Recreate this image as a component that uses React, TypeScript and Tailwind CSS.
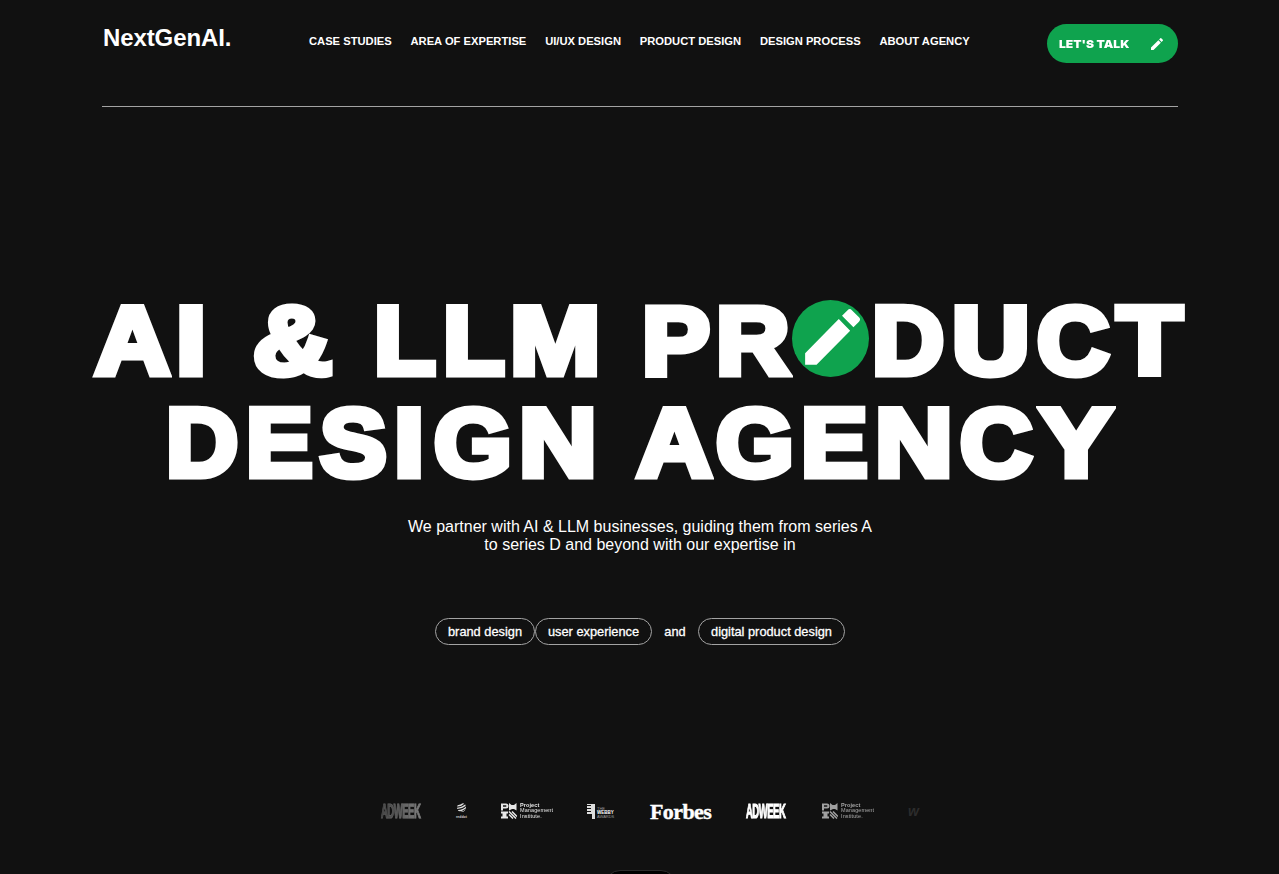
import type { ReactNode } from "react";

const navItems = [
  "CASE STUDIES",
  "AREA OF EXPERTISE",
  "UI/UX DESIGN",
  "PRODUCT DESIGN",
  "DESIGN PROCESS",
  "ABOUT AGENCY",
];

type Glyph = [char: string, className: string];

const ai: Glyph[] = [
  ["A", "w-[81.5px] scale-x-[1.08]"],
  ["I", "w-[76.6px] scale-x-[1.13]"],
];
const ampersand: Glyph[] = [["&", "w-[121.7px] scale-x-[1.14]"]];
const llm: Glyph[] = [
  ["L", "w-[68.5px] scale-x-[1.05]"],
  ["L", "w-[67.7px] scale-x-[1.05]"],
  ["M", "w-[131.2px] scale-x-[1.13]"],
];
const pr: Glyph[] = [
  ["P", "w-[74px] scale-x-[1.06]"],
  ["R", "w-[76.3px] scale-x-[1.06]"],
];
const duct: Glyph[] = [
  ["D", "w-[79.8px] scale-x-[1.04]"],
  ["U", "w-[84.8px] scale-x-[1.12]"],
  ["C", "w-[79.6px] scale-x-[1.04]"],
  ["T", "w-[62px] scale-x-[1.11]"],
];
const design: Glyph[] = [
  ["D", "w-[79.9px] scale-x-[1.04]"],
  ["E", "w-[73.7px] scale-x-[1.04]"],
  ["S", "w-[74.1px] scale-x-[1.04]"],
  ["I", "w-[39.9px] scale-x-[1.13]"],
  ["G", "w-[85px] scale-x-[1.04]"],
  ["N", "w-[118.5px] scale-x-[1.12]"],
];
const agency: Glyph[] = [
  ["A", "w-[78.5px] scale-x-[1.08]"],
  ["G", "w-[85.3px] scale-x-[1.04]"],
  ["E", "w-[73.7px] scale-x-[1.04]"],
  ["N", "w-[85px] scale-x-[1.12]"],
  ["C", "w-[80.3px] scale-x-[1.04]"],
  ["Y", "w-[68px] scale-x-[1.13]"],
];

function Word({ glyphs, className = "" }: { glyphs: Glyph[]; className?: string }) {
  return (
    <span className={`shrink-0 whitespace-nowrap ${className}`}>
      {glyphs.map(([char, shape], i) => (
        <span key={i} className={`inline-block origin-left ${shape}`}>
          {char}
        </span>
      ))}
    </span>
  );
}

function Pencil({ className }: { className: string }) {
  return (
    <svg viewBox="0 0 24 24" fill="currentColor" preserveAspectRatio="none" className={className}>
      <path d="M3 17.25V21h3.75L17.81 9.94l-3.75-3.75L3 17.25zM20.71 7.04a.996.996 0 0 0 0-1.41l-2.34-2.34a.996.996 0 0 0-1.41 0l-1.83 1.83 3.75 3.75 1.83-1.83z" />
    </svg>
  );
}

function Header() {
  return (
    <header className="mr-[101px] ml-[102px] flex h-[107px] shrink-0 items-start border-b border-[#a3a3a3] pt-6">
      <div className="w-[207px] pl-px text-2xl leading-[28px] font-bold tracking-[-0.1px]">NextGenAI.</div>
      <nav className="flex gap-[18.8px] pt-[11px] text-[11.2px] leading-[13px] font-bold whitespace-nowrap">
        {navItems.map((item) => (
          <a key={item}>{item}</a>
        ))}
      </nav>
      <button className="ml-auto flex h-[39px] w-[131px] items-center justify-between rounded-full bg-[#0fa34e] pr-[13px] pl-3 font-['Inter'] text-[11px] font-black">
        <span className="origin-left scale-x-[1.1] pt-px">LET'S TALK</span>
        <Pencil className="size-4" />
      </button>
    </header>
  );
}

function PmiLogo({ className }: { className: string }) {
  return (
    <div className={`flex items-center gap-[3px] ${className}`}>
      <svg viewBox="0 0 16 16" className="size-4">
        <path
          d="M0 .5h5a2.500 2.500 0 0 1 0 5H2V7.500H0zM2 2.300v1.400h2.800a.7.7 0 0 0 0-1.400z"
          fill="#fff"
          fillRule="evenodd"
        />
        <path d="M8 0l2.500 2h2.500L15.500 0v7.500L13 6h-2L8 7.500z" fill="#fff" />
        <path d="M0 8.500h7v2H5.500v3H7v2H0v-2h1.500v-3H0z" fill="#fff" />
        <path d="M8 8.500l7 7M11 8.500l5 5M8 11.500l4 4" stroke="#fff" strokeWidth="1.500" />
      </svg>
      <div className="text-[5.5px] leading-[5.5px] tracking-[0.1px]">
        <b>Project</b>
        <br />
        Management
        <br />
        Institute.
      </div>
    </div>
  );
}

function Adweek({ className }: { className: string }) {
  return (
    <div className="h-5 w-[41px]">
      <div
        className={`w-[92px] origin-left scale-x-[0.45] text-[21px] leading-5 font-bold tracking-[-1px] ${className}`}
      >
        ADWEEK
      </div>
    </div>
  );
}

function Slot({ className, children }: { className: string; children: ReactNode }) {
  return <div className={`flex h-5 shrink-0 items-center ${className}`}>{children}</div>;
}

function LogoStrip() {
  return (
    <div className="ml-[381px] flex h-5 w-[542px] items-center">
      <Slot className="w-[75px]">
        <Adweek className="bg-linear-to-r from-[#3c3c3c] to-[#888] bg-clip-text text-transparent [-webkit-text-stroke:1.2px_#6668]" />
      </Slot>
      <Slot className="w-[45px]">
        <div className="flex flex-col items-center text-[3.5px] leading-[4px] font-bold text-[#ccc]">
          <svg viewBox="0 0 10 10" className="mb-[3px] size-[9px]">
            <defs>
              <clipPath id="ball">
                <circle cx="5" cy="5" r="5" />
              </clipPath>
            </defs>
            <path
              d="M-1 3Q4 4 9-1M-1 6Q6 6 11 1M0 8.500Q7 9 11 4M3 11Q8 10 11 7"
              fill="none"
              stroke="#ddd"
              strokeWidth="1.600"
              clipPath="url(#ball)"
            />
          </svg>
          reddot
        </div>
      </Slot>
      <Slot className="w-[86px]">
        <PmiLogo className="opacity-90" />
      </Slot>
      <Slot className="w-[63px]">
        <svg viewBox="0 0 8 15" className="h-[15px] w-2">
          <path d="M0 0h8v15H5V10H0V8h4V7H0V5h4V4H0V2h4V1H0z" fill="#ddd" />
        </svg>
        <div className="ml-[2px] pt-[3px] text-[4px] leading-[4px] text-[#999]">
          THE
          <br />
          <b className="text-[4.5px] text-white">WEBBY</b>
          <br />
          AWARDS
        </div>
      </Slot>
      <Slot className="w-[96px]">
        <span className="pt-px font-['Liberation_Serif'] text-[22px] leading-5 font-bold tracking-[-0.6px] [-webkit-text-stroke:0.4px_white]">
          Forbes
        </span>
      </Slot>
      <Slot className="w-[76px]">
        <Adweek className="text-white [-webkit-text-stroke:1.2px_white]" />
      </Slot>
      <Slot className="w-[86px]">
        <PmiLogo className="opacity-60" />
      </Slot>
      <Slot className="w-[14px]">
        <span className="text-[14px] leading-5 font-bold text-[#2c2c2c] italic">w</span>
      </Slot>
    </div>
  );
}

export default function App() {
  return (
    <div className="flex h-[874px] w-[1279px] flex-col overflow-hidden bg-[#111] font-['Liberation_Sans',sans-serif] text-white">
      <Header />
      <main className="pt-[183px]">
        <h1 className="text-[96px] leading-[102px] font-bold [-webkit-text-stroke:7px_white]">
          <div className="flex h-[102px] pl-[94.5px]">
            <Word glyphs={ai} /> <Word glyphs={ampersand} /> <Word glyphs={llm} /> <Word glyphs={pr} />
            <span className="mt-[10px] flex h-[77px] w-[77px] shrink-0 items-center justify-center rounded-full bg-[#0fa34e]">
              <Pencil className="mb-[3px] ml-[4px] h-[74px] w-[74px]" />
            </span>
            <Word glyphs={duct} className="ml-[3.4px]" />
          </div>
          <div className="flex h-[102px] pl-[166.4px]">
            <Word glyphs={design} /> <Word glyphs={agency} />
          </div>
        </h1>
        <p className="mt-[24px] pl-px text-center text-base leading-[18px]">
          We partner with AI &amp; LLM businesses, guiding them from series A
          <br />
          to series D and beyond with our expertise in
        </p>
        <div className="mt-[64px] ml-[435px] flex h-[27px] items-center text-[12.8px] leading-[15px] whitespace-nowrap [-webkit-text-stroke:0.3px_white]">
          <span className="flex h-[27px] w-[100px] items-center justify-center rounded-full border border-[#a3a3a3]">brand design</span>
          <span className="flex h-[27px] w-[117px] items-center justify-center rounded-full border border-[#a3a3a3]">user experience</span>
          <span className="w-[46px] text-center">and</span>
          <span className="flex h-[27px] w-[147px] items-center justify-center rounded-full border border-[#a3a3a3]">digital product design</span>
        </div>
        <div className="mt-[156px]">
          <LogoStrip />
        </div>
        <div className="mt-[49px] ml-[605px] h-[30px] w-[71px] rounded-full border border-[#2c2c2c] bg-black" />
      </main>
    </div>
  );
}
